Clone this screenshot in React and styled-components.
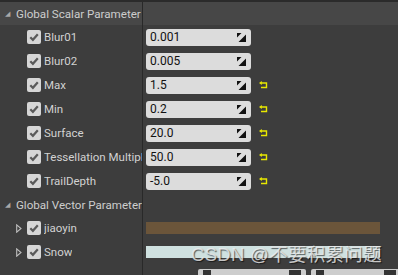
import React from "react";
import styled, { createGlobalStyle } from "styled-components";

const GlobalStyle = createGlobalStyle`
	html, body {
		margin: 0;
		padding: 0;
		background: #3d3d3d;
		overflow: hidden;
	}
	body {
		font-family: Roboto, "Liberation Sans", sans-serif;
	}
`;

const scalars = [
	{ name: "Blur01", value: "0.001", reset: false },
	{ name: "Blur02", value: "0.005", reset: false },
	{ name: "Max", value: "1.5", reset: true },
	{ name: "Min", value: "0.2", reset: true },
	{ name: "Surface", value: "20.0", reset: true },
	{ name: "Tessellation Multiplier", value: "50.0", reset: true },
	{ name: "TrailDepth", value: "-5.0", reset: true },
];

const vectors = [
	{ name: "jiaoyin", color: "#6b553a" },
	{ name: "Snow", color: "#cfe1e0" },
];

const CheckBox = () => (
	<Check>
		<svg width="10" height="10" viewBox="0 0 10 10">
			<path d="M1.3 5.2 L3.9 7.8 L8.8 2.2" fill="none" stroke="#5a5a5a" strokeWidth="2.2" />
		</svg>
	</Check>
);

const DragIcon = () => (
	<Drag width="9" height="9" viewBox="0 0 9 9">
		<polygon points="0,0 4.5,0 0,4.5" fill="#111" />
		<polygon points="9,1.5 9,9 1.5,9" fill="#111" />
	</Drag>
);

const ResetIcon = () => (
	<Reset width="9" height="8" viewBox="0 0 9 8">
		<path d="M2 2 H7.5 V6.5 H2" fill="none" stroke="#e8e800" strokeWidth="1.4" />
		<polygon points="0,2 2.8,0 2.8,4" fill="#e8e800" />
	</Reset>
);

const App = () => {
	return (
		<>
			<GlobalStyle />
			<Panel>
				<TopStrip />
				<Header highlight>
					<HeaderLeft>
						<Caret>◢</Caret>
						<HeaderText>Global Scalar Parameter</HeaderText>
					</HeaderLeft>
					<RightCell />
				</Header>
				{scalars.map((s) => (
					<Row key={s.name}>
						<LeftCell>
							<CheckBox />
							<Label>{s.name}</Label>
						</LeftCell>
						<RightCell>
							<NumberBox>
								<span>{s.value}</span>
								<DragIcon />
							</NumberBox>
							{s.reset && <ResetIcon />}
						</RightCell>
					</Row>
				))}
				<Header>
					<HeaderLeft>
						<Caret>◢</Caret>
						<HeaderText>Global Vector Parameter</HeaderText>
					</HeaderLeft>
					<RightCell />
				</Header>
				{vectors.map((v) => (
					<Row key={v.name}>
						<LeftCell indent={16}>
							<Expander>
								<svg width="6" height="9" viewBox="0 0 6 9">
									<path d="M0.7 0.8 L5 4.5 L0.7 8.2 Z" fill="none" stroke="#bdbdbd" strokeWidth="1.1" />
								</svg>
							</Expander>
							<CheckBox />
							<Label>{v.name}</Label>
						</LeftCell>
						<RightCell>
							<ColorBar style={{ background: v.color }} />
						</RightCell>
					</Row>
				))}
				<Footer>
					<LeftCell />
					<FooterButtons>
						<FooterButton width={108}>
							<ButtonMark />
							<ButtonMark small />
						</FooterButton>
						<FooterButton width={90}>
							<ButtonMark />
							<ButtonMark small />
						</FooterButton>
					</FooterButtons>
				</Footer>
				<Watermark>CSDN @不要积累问题</Watermark>
			</Panel>
		</>
	);
};

const Panel = styled.div`
	position: relative;
	width: 398px;
	height: 275px;
	overflow: hidden;
	background: #3d3d3d;
	display: flex;
	flex-direction: column;
`;

const TopStrip = styled.div`
	height: 2px;
	background: #2b2b2b;
	flex-shrink: 0;
`;

const Header = styled.div`
	display: flex;
	height: 23px;
	flex-shrink: 0;
	background: ${(props) => (props.highlight ? "#474747" : "#3d3d3d")};
`;

const LeftCell = styled.div`
	width: 143px;
	flex-shrink: 0;
	display: flex;
	align-items: center;
	box-sizing: border-box;
	padding-left: ${(props) => props.indent ?? 27}px;
	border-right: 1px solid #292929;
	overflow: hidden;
	white-space: nowrap;
`;

const HeaderLeft = styled(LeftCell)`
	padding-left: 5px;
`;

const Caret = styled.span`
	font-size: 7px;
	color: #a8a8a8;
	width: 11px;
	line-height: 1;
	margin-top: 1px;
`;

const HeaderText = styled.span`
	font-size: 11.6px;
	color: #cdcdcd;
`;

const RightCell = styled.div`
	flex: 1;
	display: flex;
	align-items: center;
	padding-left: 3px;
`;

const Row = styled.div`
	display: flex;
	height: 24px;
	flex-shrink: 0;
`;

const Check = styled.div`
	width: 14px;
	height: 14px;
	border-radius: 2px;
	background: #d6d6d6;
	display: flex;
	align-items: center;
	justify-content: center;
	flex-shrink: 0;
`;

const Expander = styled.div`
	width: 11px;
	display: flex;
	align-items: center;
	flex-shrink: 0;
`;

const Label = styled.span`
	margin-left: 3px;
	font-size: 11.5px;
	color: #d2d2d2;
	min-width: 0;
	overflow: hidden;
`;

const NumberBox = styled.div`
	width: 105px;
	height: 17px;
	border-radius: 3px;
	background: #dcdcdc;
	display: flex;
	align-items: center;
	justify-content: space-between;
	box-sizing: border-box;
	padding: 0 5px 0 4px;
	font-size: 12px;
	color: #111;
`;

const Drag = styled.svg`
	display: block;
`;

const Reset = styled.svg`
	display: block;
	margin-left: 8px;
`;

const ColorBar = styled.div`
	width: 234px;
	height: 12px;
`;

const Footer = styled.div`
	display: flex;
	flex: 1;
`;

const FooterButtons = styled.div`
	display: flex;
	gap: 5px;
	padding: 5px 0 0 55px;
`;

const FooterButton = styled.div`
	width: ${(props) => props.width}px;
	height: 20px;
	background: #cdcdcd;
	border-radius: 2px;
	display: flex;
	align-items: flex-start;
	gap: 40px;
	padding: 1px 5px;
	box-sizing: border-box;
	flex-shrink: 0;
`;

const ButtonMark = styled.div`
	width: ${(props) => (props.small ? 12 : 8)}px;
	height: 8px;
	background: #333;
	margin-left: ${(props) => (props.small ? "auto" : "0")};
`;

const Watermark = styled.div`
	position: absolute;
	left: 191px;
	top: 240px;
	font-family: "Liberation Sans", "Noto Sans CJK SC", sans-serif;
	font-size: 18.5px;
	letter-spacing: 0.3px;
	color: rgba(240, 240, 240, 0.8);
	text-shadow: 1px 1px 1px rgba(0, 0, 0, 0.6);
	white-space: nowrap;
	pointer-events: none;
`;

export default App;
